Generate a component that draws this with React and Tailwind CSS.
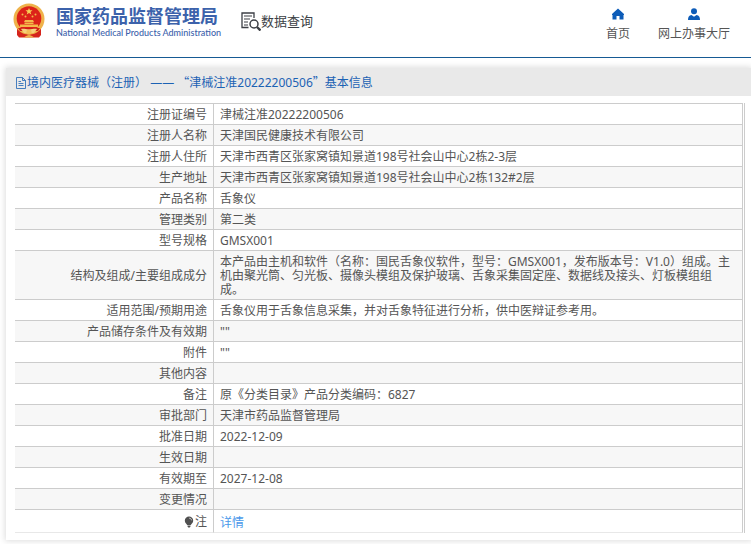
import React from 'react';

const rows = [
  ['注册证编号', '津械注准20222200506'],
  ['注册人名称', '天津国民健康技术有限公司'],
  ['注册人住所', '天津市西青区张家窝镇知景道198号社会山中心2栋2-3层'],
  ['生产地址', '天津市西青区张家窝镇知景道198号社会山中心2栋132#2层'],
  ['产品名称', '舌象仪'],
  ['管理类别', '第二类'],
  ['型号规格', 'GMSX001'],
  [
    '结构及组成/主要组成成分',
    '本产品由主机和软件（名称：国民舌象仪软件，型号：GMSX001，发布版本号：V1.0）组成。主机由聚光筒、匀光板、摄像头模组及保护玻璃、舌象采集固定座、数据线及接头、灯板模组组成。',
  ],
  ['适用范围/预期用途', '舌象仪用于舌象信息采集，并对舌象特征进行分析，供中医辩证参考用。'],
  ['产品储存条件及有效期', '""'],
  ['附件', '""'],
  ['其他内容', ''],
  ['备注', '原《分类目录》产品分类编码：6827'],
  ['审批部门', '天津市药品监督管理局'],
  ['批准日期', '2022-12-09'],
  ['生效日期', ''],
  ['有效期至', '2027-12-08'],
  ['变更情况', ''],
];

function Emblem() {
  return (
    <svg viewBox="0 0 32 36" className="h-9 w-8 shrink-0" aria-hidden="true">
      <path d="M4 22 4 32l2 2.500h20l2-2.500V22z" fill="#d5241c" />
      <circle cx="16" cy="16" r="15.500" fill="#efb24a" />
      <circle cx="16" cy="15.500" r="12.300" fill="#dc2219" />
      <path d="m16 5 1 2.300h2.500l-2 1.600.8 2.500-2.300-1.500-2.300 1.500.8-2.500-2-1.600H15z" fill="#f8cf55" />
      <g fill="#f3b94a">
        <circle cx="9.500" cy="11.500" r="1" />
        <circle cx="12.500" cy="13.500" r="1" />
        <circle cx="19.500" cy="13.500" r="1" />
        <circle cx="22.500" cy="11.500" r="1" />
        <path d="M12 17h8l1 2H11zM11.500 19.500h9V21h-9zM7 21.500h18V24H7z" />
      </g>
      <path d="M5 25h22l-2 3H7z" fill="#cf1d17" />
      <path d="M8 26c3-.5 5 .5 8 .5s5-1 8-.5l-3 4H11z" fill="#f5cf7c" />
      <circle cx="16" cy="29" r="2.600" fill="#f2bd58" />
      <path d="M10 34.500c2 0 3-2.500 6-2.500s4 2.500 6 2.500z" fill="#efb24a" />
    </svg>
  );
}

function SearchDocIcon() {
  return (
    <svg viewBox="0 0 20 20" className="h-5 w-5 shrink-0" fill="none" stroke="#3c3f45" aria-hidden="true">
      <path d="M7.500 16.500H1V2h12v5" strokeWidth="1.300" />
      <path d="M3 5h8M3 8h6M3 11h4M3 14h4" strokeWidth="1.100" />
      <circle cx="13" cy="13" r="4" strokeWidth="1.500" />
      <path d="m16 16 3.500 3.500" strokeWidth="2.400" />
    </svg>
  );
}

function HomeIcon() {
  return (
    <svg viewBox="0 0 12 12" className="h-3 w-3" fill="#0d5cb8" aria-hidden="true">
      <path d="M6 .5 0 6v1h.500v4.500h4V8h3v3.500h4V7h.500V6z" />
    </svg>
  );
}

function UserIcon() {
  return (
    <svg viewBox="0 0 12 12" className="h-3 w-3" fill="#0d5cb8" aria-hidden="true">
      <circle cx="6" cy="3.200" r="3" />
      <path d="M0 12c0-3 1-4.500 3.500-5L6 8.800 8.500 7C11 7.500 12 9 12 12z" />
    </svg>
  );
}

function DocIcon() {
  return (
    <svg viewBox="0 0 10 12" className="h-3 w-3 shrink-0" fill="none" stroke="#1c62b4" aria-hidden="true">
      <path d="M.5.500h6l3 3v8h-9zM6.500.500v3h3M2.500 4.500h2.500M2.500 6.500h5M2.500 8.500h5" strokeWidth=".8" />
    </svg>
  );
}

function BulbIcon() {
  return (
    <svg viewBox="0 0 10 12" className="h-3 w-[10px]" aria-hidden="true">
      <path d="M5 .5a4.200 4.200 0 0 0-4.200 4.200C.8 7 2.800 7.800 3.200 9h3.600C7.200 7.800 9.200 7 9.200 4.700A4.200 4.200 0 0 0 5 .5zM3.500 9.500h3v1l-.8 1H4.300l-.8-1z" fill="#505050" />
      <path d="M5.200 2.200c1.300 0 2.200.9 2.300 2.100" stroke="#fff" strokeWidth=".7" fill="none" />
    </svg>
  );
}

const label = 'border-r border-b border-[#ccc] pt-1 pr-[6px] pb-[2px] text-right font-normal align-middle';
const value = 'border-r border-b border-[#ccc] pt-1 pr-2 pb-[2px] pl-[6px] text-left align-middle';

export default function App() {
  return (
    <div className="bg-white pb-1 font-['Noto_Sans','Noto_Sans_CJK_SC',sans-serif] text-xs text-[#555]">
      <header className="flex h-[58px] items-start justify-between border-b border-[#165a94]">
        <div className="flex items-start gap-5 pl-[13px]">
          <div className="flex items-start gap-[11px] pt-[3px] text-[#3c62ab]">
            <Emblem />
            <div className="pt-[3px]">
              <h1 className="text-lg leading-5 font-bold whitespace-nowrap">国家药品监督管理局</h1>
              <p className="font-['Lato',sans-serif] text-[9px] leading-[14px] font-medium whitespace-nowrap">
                National Medical Products Administration
              </p>
            </div>
          </div>
          <div className="flex items-center pt-[11px] text-[13px] leading-5 text-[#3c3f45]">
            <SearchDocIcon />
            <span className="whitespace-nowrap">数据查询</span>
          </div>
        </div>
        <nav className="flex gap-7 pt-2 pr-[21px] leading-4">
          <a href="#home" className="flex flex-col items-center gap-[6px] whitespace-nowrap">
            <HomeIcon />
            首页
          </a>
          <a href="#hall" className="flex flex-col items-center gap-[6px] whitespace-nowrap">
            <UserIcon />
            网上办事大厅
          </a>
        </nav>
      </header>

      <main className="mt-[10px] ml-[6px] bg-white pb-[7px] shadow-[0_0_6px_1px_#ddd]">
        <h2 className="flex h-7 items-center bg-[#e9e9e9] pt-px pl-[9px] text-xs text-[#1c62b4]">
          <DocIcon />
          <span className="font-['Noto_Sans_CJK_SC',sans-serif] leading-4 whitespace-pre">
            境内医疗器械（注册）<span className="font-['Noto_Sans',sans-serif]"> —— </span>“津械注准<span className="font-['Noto_Sans',sans-serif]">20222200506</span>”基本信息
          </span>
        </h2>
        <div className="mt-[7px] mr-[6px] ml-[9px] border-r border-[#ccc] pr-px">
          <table className="w-full table-fixed border-separate border-spacing-0 border-t border-[#ccc] leading-[14px]">
            <colgroup>
              <col className="w-[199px]" />
              <col />
            </colgroup>
            <tbody>
              {rows.map(([name, text]) => (
                <tr key={name} className="even:bg-[#f7f7f7]">
                  <th scope="row" className={label}>{name}</th>
                  <td className={value}>{text}</td>
                </tr>
              ))}
              <tr>
                <th scope="row" className="border-r border-b border-[#ccc] border-b-[#e8e8e8] pt-[5px] pr-[6px] pb-[3px] font-normal">
                  <span className="flex items-center justify-end gap-px">
                    <BulbIcon />注
                  </span>
                </th>
                <td className="border-r border-b border-[#ccc] border-b-[#e8e8e8] pt-[6px] pb-[2px] pl-[6px]">
                  <a href="#detail" className="text-[#4a98ea]">详情</a>
                </td>
              </tr>
            </tbody>
          </table>
        </div>
      </main>
    </div>
  );
}
